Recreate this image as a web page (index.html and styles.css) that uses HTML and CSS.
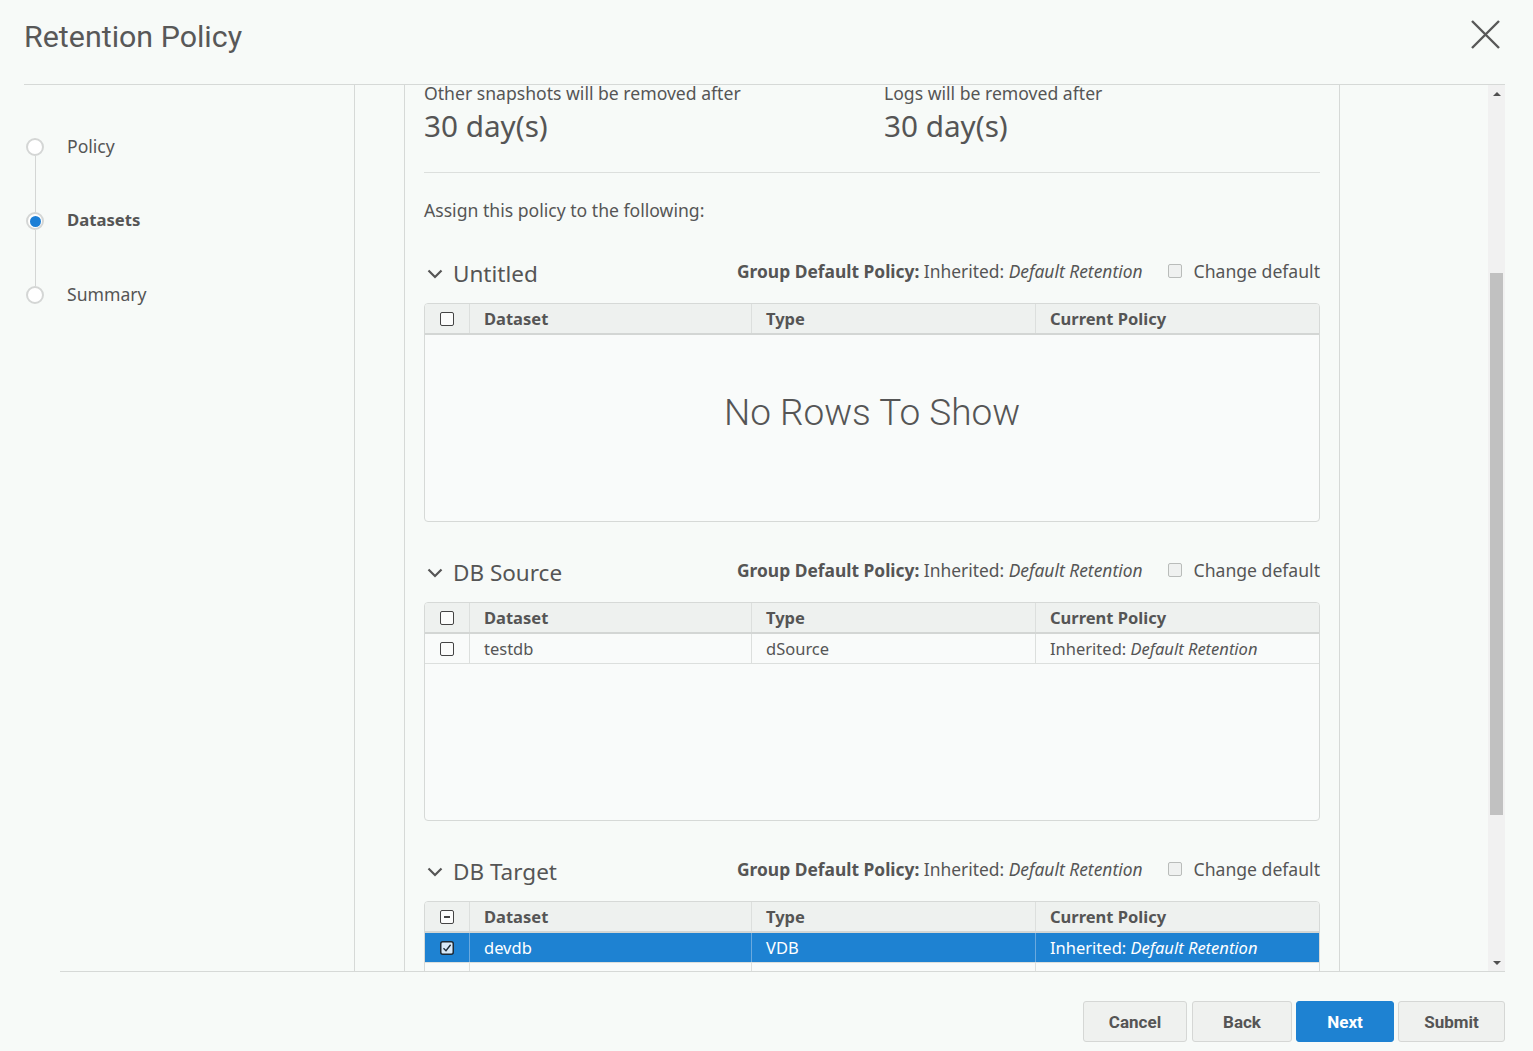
FILE: index.html
```html
<!DOCTYPE html>
<html lang="en">
<head>
<meta charset="utf-8">
<title>Retention Policy</title>
<link rel="stylesheet" href="styles.css">
</head>
<body>
<div class="dialog">
  <header class="dlg-header">
    <h1 class="dlg-title">Retention Policy</h1>
    <button class="close-btn" aria-label="Close">
      <svg width="29" height="29" viewBox="0 0 29 29"><path d="M1 1 L28 28 M28 1 L1 28" stroke="#585858" stroke-width="2.4" fill="none"/></svg>
    </button>
  </header>

  <div class="dlg-main">
    <nav class="stepper">
      <div class="step"><span class="step-dot"></span><span class="step-label">Policy</span></div>
      <div class="step-line"></div>
      <div class="step"><span class="step-dot active"></span><span class="step-label active">Datasets</span></div>
      <div class="step-line"></div>
      <div class="step"><span class="step-dot"></span><span class="step-label">Summary</span></div>
    </nav>

    <div class="panel">
      <div class="panel-scroll">
        <div class="content-col">
          <div class="content-inner">
            <div class="summary">
              <div class="summary-item">
                <div class="summary-label">Other snapshots will be removed after</div>
                <div class="summary-value">30 day(s)</div>
              </div>
              <div class="summary-item">
                <div class="summary-label">Logs will be removed after</div>
                <div class="summary-value">30 day(s)</div>
              </div>
            </div>

            <p class="assign">Assign this policy to the following:</p>

            <section class="group">
              <div class="group-head">
                <div class="group-title">
                  <svg class="chev" width="16" height="10" viewBox="0 0 16 10"><path d="M1.5 1.5 L8 8 L14.5 1.5" stroke="#555" stroke-width="2.2" fill="none"/></svg>
                  <span>Untitled</span>
                </div>
                <div class="group-info"><b>Group Default Policy:</b> Inherited: <i>Default Retention</i></div>
                <label class="change-default"><span class="cd-box"></span>Change default</label>
              </div>
              <div class="grid">
                <div class="grid-row grid-head">
                  <div class="cell cell-check"><span class="cb"></span></div>
                  <div class="cell">Dataset</div>
                  <div class="cell">Type</div>
                  <div class="cell">Current Policy</div>
                </div>
                <div class="no-rows">No Rows To Show</div>
              </div>
            </section>

            <section class="group">
              <div class="group-head">
                <div class="group-title">
                  <svg class="chev" width="16" height="10" viewBox="0 0 16 10"><path d="M1.5 1.5 L8 8 L14.5 1.5" stroke="#555" stroke-width="2.2" fill="none"/></svg>
                  <span>DB Source</span>
                </div>
                <div class="group-info"><b>Group Default Policy:</b> Inherited: <i>Default Retention</i></div>
                <label class="change-default"><span class="cd-box"></span>Change default</label>
              </div>
              <div class="grid">
                <div class="grid-row grid-head">
                  <div class="cell cell-check"><span class="cb"></span></div>
                  <div class="cell">Dataset</div>
                  <div class="cell">Type</div>
                  <div class="cell">Current Policy</div>
                </div>
                <div class="grid-row">
                  <div class="cell cell-check"><span class="cb"></span></div>
                  <div class="cell">testdb</div>
                  <div class="cell">dSource</div>
                  <div class="cell">Inherited: <i>Default Retention</i></div>
                </div>
              </div>
            </section>

            <section class="group">
              <div class="group-head">
                <div class="group-title">
                  <svg class="chev" width="16" height="10" viewBox="0 0 16 10"><path d="M1.5 1.5 L8 8 L14.5 1.5" stroke="#555" stroke-width="2.2" fill="none"/></svg>
                  <span>DB Target</span>
                </div>
                <div class="group-info"><b>Group Default Policy:</b> Inherited: <i>Default Retention</i></div>
                <label class="change-default"><span class="cd-box"></span>Change default</label>
              </div>
              <div class="grid">
                <div class="grid-row grid-head">
                  <div class="cell cell-check"><span class="cb cb-partial"></span></div>
                  <div class="cell">Dataset</div>
                  <div class="cell">Type</div>
                  <div class="cell">Current Policy</div>
                </div>
                <div class="grid-row selected">
                  <div class="cell cell-check">
                    <svg class="cb-svg" width="14" height="14" viewBox="0 0 14 14"><rect x="0.75" y="0.75" width="12.5" height="12.5" rx="2" fill="#d7e8f7" stroke="#1d2a36" stroke-width="1.5"/><path d="M3.5 7.2 L6 9.7 L10.6 3.8" stroke="#1d2a36" stroke-width="1.4" fill="none"/></svg>
                  </div>
                  <div class="cell">devdb</div>
                  <div class="cell">VDB</div>
                  <div class="cell">Inherited: <i>Default Retention</i></div>
                </div>
                <div class="grid-row">
                  <div class="cell cell-check"><span class="cb"></span></div>
                  <div class="cell"></div>
                  <div class="cell"></div>
                  <div class="cell"></div>
                </div>
              </div>
            </section>
          </div>
        </div>
      </div>
      <div class="scrollbar">
        <div class="sb-arrow"><span class="tri-up"></span></div>
        <div class="sb-track"><div class="sb-thumb"></div></div>
        <div class="sb-arrow"><span class="tri-down"></span></div>
      </div>
    </div>
  </div>

  <footer class="dlg-footer">
    <button class="btn btn-cancel">Cancel</button>
    <button class="btn btn-back">Back</button>
    <button class="btn btn-next primary">Next</button>
    <button class="btn btn-submit">Submit</button>
  </footer>
</div>
</body>
</html>
```

FILE: styles.css
```css
* { box-sizing: border-box; margin: 0; padding: 0; }
html, body { height: 100%; }
body {
  background: #f7faf8;
  font-family: "Noto Sans", "Open Sans", sans-serif;
  color: #555;
  overflow: hidden;
}
.dialog {
  margin: 0 28px 0 24px;
  height: 1051px;
  display: flex;
  flex-direction: column;
}

/* header */
.dlg-header {
  height: 85px;
  flex: none;
  border-bottom: 1px solid #d6d9d7;
  display: flex;
  justify-content: space-between;
  align-items: flex-start;
}
.dlg-title {
  font-family: Roboto, sans-serif;
  font-weight: 400;
  font-size: 30.4px;
  line-height: 34px;
  margin-top: 20px;
  color: #585858;
}
.close-btn {
  width: 29px;
  height: 29px;
  margin-top: 20px;
  margin-right: 5px;
  border: 0;
  background: none;
}
.close-btn svg { display: block; }

/* main */
.dlg-main {
  height: 886px;
  flex: none;
  display: flex;
}
.stepper {
  width: 331px;
  flex: none;
  border-right: 1px solid #d6d9d7;
  padding: 53px 0 0 2px;
}
.step {
  display: flex;
  align-items: center;
  height: 18px;
}
.step-dot {
  width: 18px;
  height: 18px;
  flex: none;
  border-radius: 50%;
  border: 2px solid #d4d6d5;
  background: #fff;
  display: flex;
  align-items: center;
  justify-content: center;
}
.step-dot.active::after {
  content: "";
  width: 11px;
  height: 11px;
  border-radius: 50%;
  background: #1c7fd6;
}
.step-label {
  margin-left: 23px;
  font-size: 17.6px;
  line-height: 22px;
  margin-bottom: 2px;
}
.step-label.active { font-weight: 700; font-size: 16.7px; }
.step-line {
  width: 1px;
  height: 56px;
  margin-left: 9px;
  background: #d4d6d5;
}

.panel {
  flex: 1;
  min-width: 0;
  display: flex;
}
.panel-scroll {
  flex: 1;
  overflow: hidden;
  padding-left: 49px;
}
.content-col {
  width: 936px;
  height: 100%;
  border-left: 1px solid #d6d9d7;
  border-right: 1px solid #d6d9d7;
  padding: 0 19px;
}

.summary {
  display: flex;
  padding-bottom: 28px;
  border-bottom: 1px solid #dcdfdd;
}
.summary-item { width: 460px; flex: none; }
.summary-item + .summary-item { flex: 1; width: auto; }
.summary-label { font-size: 17.6px; line-height: 16px; }
.summary-value { font-size: 29.7px; line-height: 36px; margin-top: 7px; }

.assign {
  margin-top: 26px;
  font-size: 17.6px;
  line-height: 22px;
}

.group { margin-top: 33px; }
.assign + .group { margin-top: 35px; }
.group-head {
  height: 36px;
  display: flex;
  align-items: center;
  margin-bottom: 11px;
}
.group-title {
  display: flex;
  align-items: center;
  font-size: 22.5px;
  line-height: 36px;
}
.chev { margin: 0 10px 0 3px; display: block; }
.group-info {
  margin-left: auto;
  font-size: 17.4px;
  line-height: 22px;
  margin-bottom: 6px;
}
.group-info b { font-weight: 700; }
.change-default {
  display: flex;
  align-items: center;
  margin-left: 25px;
  font-size: 17.6px;
  line-height: 22px;
  margin-bottom: 6px;
}
.cd-box {
  width: 14px;
  height: 14px;
  border: 1px solid #b9bcba;
  border-radius: 2px;
  background: #eff1f0;
  margin-right: 12px;
}

/* grid */
.grid {
  position: relative;
  height: 219px;
  border: 1px solid #d6d9d7;
  border-radius: 4px;
  overflow: hidden;
  background: #f9fbfa;
}
.grid-row {
  display: grid;
  grid-template-columns: 45px 282px 284px 1fr;
  height: 30px;
  border-bottom: 1px solid #dcdfdd;
  font-size: 16.5px;
  line-height: 29px;
}
.grid-head {
  height: 31px;
  background: #eef1ef;
  border-bottom: 2px solid #d3d6d4;
  font-weight: 700;
}
.cell {
  padding-left: 14px;
  border-right: 1px solid #dcdfdd;
  white-space: nowrap;
  overflow: hidden;
}
.cell:last-child { border-right: 0; }
.cell-check {
  padding: 0;
  display: flex;
  align-items: center;
  justify-content: center;
}
.cb {
  width: 14px;
  height: 14px;
  border: 1.5px solid #444;
  border-radius: 2px;
  background: #fbfcfb;
  display: flex;
  align-items: center;
  justify-content: center;
}
.cb-partial::after {
  content: "";
  width: 6px;
  height: 2px;
  background: #444;
}
.cb-svg { display: block; }
.grid-row.selected {
  background: #1e82d2;
  color: #fff;
}
.grid-row.selected .cell { border-right-color: #6aa9de; }
.no-rows {
  position: absolute;
  inset: 0;
  display: flex;
  align-items: center;
  justify-content: center;
  font-family: Roboto, sans-serif;
  font-weight: 300;
  font-size: 37px;
  color: #555;
}

/* scrollbar */
.scrollbar {
  width: 17px;
  flex: none;
  background: #f1f1f1;
  display: flex;
  flex-direction: column;
}
.sb-arrow {
  height: 17px;
  flex: none;
  display: flex;
  align-items: center;
  justify-content: center;
}
.tri-up, .tri-down {
  width: 0;
  height: 0;
  border-left: 4px solid transparent;
  border-right: 4px solid transparent;
}
.tri-up { border-bottom: 4px solid #505050; }
.tri-down { border-top: 4px solid #505050; }
.sb-track {
  flex: 1;
  padding: 171px 2px 0;
}
.sb-thumb {
  height: 542px;
  background: #c1c1c1;
}

/* footer */
.dlg-footer {
  flex: none;
  margin-left: 36px;
  border-top: 1px solid #d6d9d7;
  padding-top: 29px;
  display: flex;
  justify-content: flex-end;
}
.btn {
  height: 41px;
  font-family: Roboto, sans-serif;
  font-weight: 700;
  font-size: 17px;
  color: #555;
  background: #eff1ef;
  border: 1px solid #d5d7d5;
  border-radius: 3px;
}
.btn-cancel { width: 104px; }
.btn-back { width: 100px; margin-left: 5px; }
.btn-next { width: 98px; margin-left: 4px; }
.btn-submit { width: 107px; margin-left: 4px; }
.btn.primary {
  background: #1e82d2;
  border-color: #1e82d2;
  color: #fff;
}
```
